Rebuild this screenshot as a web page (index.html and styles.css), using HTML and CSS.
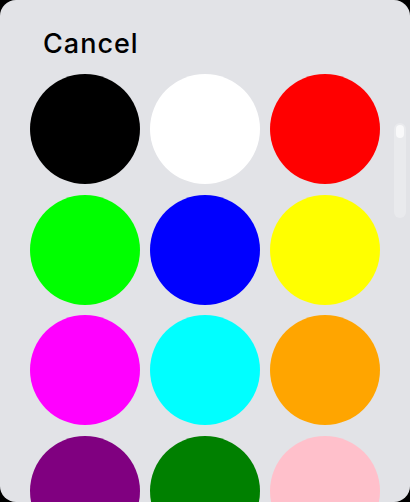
FILE: index.html
```html
<!DOCTYPE html>
<html lang="en">
<head>
  <meta charset="UTF-8" />
  <title>Pick a Colour</title>
  <link rel="stylesheet" href="styles.css">
</head>
<body>
  <div class="sheet">
    <div class="sheet-header">
      <button class="cancel-btn">Cancel</button>
    </div>
    <div class="swatches">
      <div class="swatch" style="background: #000000"></div>
      <div class="swatch" style="background: #ffffff"></div>
      <div class="swatch" style="background: #ff0000"></div>
      <div class="swatch" style="background: #00ff00"></div>
      <div class="swatch" style="background: #0000ff"></div>
      <div class="swatch" style="background: #ffff00"></div>
      <div class="swatch" style="background: #ff00ff"></div>
      <div class="swatch" style="background: #00ffff"></div>
      <div class="swatch" style="background: #ffa500"></div>
      <div class="swatch" style="background: #800080"></div>
      <div class="swatch" style="background: #008000"></div>
      <div class="swatch" style="background: #ffc0cb"></div>
    </div>
    <div class="scroll-track">
      <div class="scroll-thumb"></div>
    </div>
  </div>
</body>
</html>
```

FILE: styles.css
```css
html, body {
  margin: 0;
  height: 100%;
  background: #000;
}

.sheet {
  position: relative;
  height: 100%;
  background: #e2e3e7;
  border-radius: 16px;
  overflow: hidden;
  font-family: Inter, 'Noto Sans', sans-serif;
}

.sheet-header {
  padding: 26px 0 0 43px;
  height: 48px;
  box-sizing: border-box;
}

.cancel-btn {
  padding: 0;
  border: none;
  background: none;
  font-family: inherit;
  font-size: 27px;
  font-weight: 500;
  letter-spacing: 1px;
  line-height: 36px;
  color: #000;
  cursor: pointer;
}

.swatches {
  display: grid;
  grid-template-columns: repeat(3, 110px);
  column-gap: 10px;
  row-gap: 10.7px;
  padding: 26px 0 0 30px;
}

.swatch {
  width: 110px;
  height: 110px;
  border-radius: 50%;
}

/* overlay scroll indicator */
.scroll-track {
  position: absolute;
  top: 123px;
  left: 394px;
  width: 12px;
  height: 95px;
  border-radius: 6px;
  background: rgba(255, 255, 255, 0.25);
}

.scroll-thumb {
  margin: 2px auto 0;
  width: 8px;
  height: 13px;
  border-radius: 4px;
  background: rgba(255, 255, 255, 0.7);
}
```
